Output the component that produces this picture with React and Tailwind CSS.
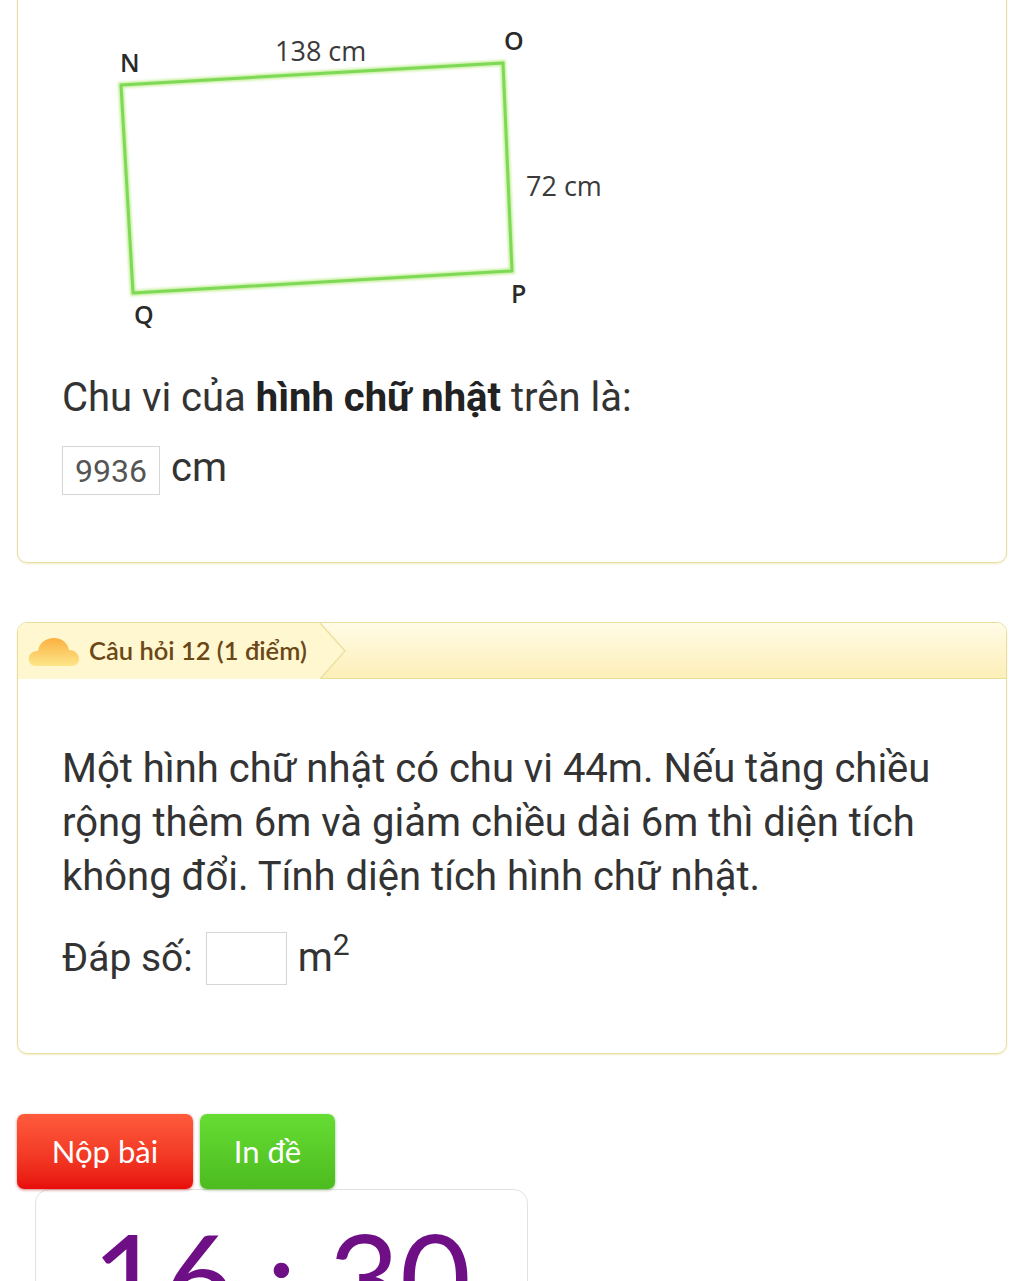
import React from 'react';

function Figure() {
  // Rectangle NOPQ drawn as in the worksheet, coords are page coords
  return (
    <svg width="660" height="345" viewBox="0 0 660 345" className="block -ml-[18px]" style={{ fontFamily: '"Open Sans", sans-serif' }}>
      <defs>
        <filter id="glow" x="-10%" y="-10%" width="120%" height="120%">
          <feGaussianBlur stdDeviation="1.2" />
        </filter>
      </defs>
      <polygon points="121,84 503,62 512,270 133,292" fill="none" stroke="#c8f0a0" strokeWidth="6" filter="url(#glow)" />
      <polygon points="121,84 503,62 512,270 133,292" fill="none" stroke="#7ed957" strokeWidth="3" strokeLinejoin="round" />
      <text x="120" y="71" fontSize="25" fontWeight="600" fill="#2a2a2a">N</text>
      <text x="275" y="60" fontSize="27" fill="#3a3a3a">138 cm</text>
      <text x="504" y="49" fontSize="25" fontWeight="600" fill="#2a2a2a">O</text>
      <text x="526" y="195" fontSize="27" fill="#3a3a3a">72 cm</text>
      <text x="511" y="302" fontSize="25" fontWeight="600" fill="#2a2a2a">P</text>
      <text x="134" y="323" fontSize="25" fontWeight="600" fill="#2a2a2a">Q</text>
    </svg>
  );
}

function Cloud() {
  return (
    <svg width="54" height="36" viewBox="0 0 54 36" className="shrink-0">
      <defs>
        <linearGradient id="cloudg" x1="0" y1="0" x2="0" y2="1">
          <stop offset="0%" stopColor="#fbb040" />
          <stop offset="100%" stopColor="#fde68a" />
        </linearGradient>
      </defs>
      <path
        d="M9 33 C3 33 1 28 2 24 C3 20 7 18 11 18 C12 10 19 5 27 5 C35 5 41 10 42 17 C48 17 52 21 52 26 C52 30 49 33 45 33 Z"
        fill="url(#cloudg)"
      />
    </svg>
  );
}

export default function App() {
  return (
    <div className="w-[1024px] h-[1281px] overflow-hidden bg-white px-[17px] text-[#333]" style={{ fontFamily: 'Roboto, "Noto Sans", sans-serif' }}>
      {/* Question 11 card (top cut off) */}
      <div className="-mt-[24px] pt-[24px] border border-[#e8df9f] rounded-[10px] pb-[67px] shadow-[0_1px_2px_rgba(220,205,120,0.4)]">
        <Figure />
        <p className="mt-[28px] pl-[44px] text-[40px] leading-[48px]">
          Chu vi của <b className="font-bold text-[#222]">hình chữ nhật</b> trên là:
        </p>
        <div className="mt-[24px] pl-[44px] flex items-center gap-[11px]">
          <div className="w-[98px] h-[49px] border border-[#d6d6d6] flex items-center justify-center text-[32px] text-[#555]">9936</div>
          <span className="text-[40px] leading-none -mt-[6px]">cm</span>
        </div>
      </div>

      {/* Question 12 card */}
      <div className="mt-[59px] border border-[#e8df9f] rounded-[10px] overflow-hidden shadow-[0_1px_2px_rgba(220,205,120,0.4)]">
        <div className="relative h-[56px] border-b border-[#e9df9c] bg-gradient-to-b from-[#fffbe6] to-[#fdefb8] flex items-center">
          <svg width="330" height="56" viewBox="0 0 330 56" className="absolute left-0 top-0">
            <polygon points="0,0 302,0 327,28 302,56 0,56" fill="#fff7cf" />
            <polyline points="302,0 327,28 302,56" fill="none" stroke="#ede1a0" strokeWidth="1.5" />
          </svg>
          <div className="relative flex items-center pl-[9px] gap-[8px]">
            <Cloud />
            <span className="text-[25.5px] font-semibold text-[#6b4718]" style={{ fontFamily: 'Lato, "Open Sans", sans-serif' }}>
              Câu hỏi 12 (1 điểm)
            </span>
          </div>
        </div>
        <div className="pt-[63px] pb-[65px] pl-[44px] pr-[40px]">
          <p className="text-[40px] leading-[54px]">
            Một hình chữ nhật có chu vi 44m. Nếu tăng chiều rộng thêm 6m và giảm chiều dài 6m thì diện tích không đổi. Tính diện tích hình chữ nhật.
          </p>
          <div className="mt-[24px] flex items-center">
            <span className="text-[39px]">Đáp số:</span>
            <div className="ml-[13px] w-[81px] h-[53px] border border-[#d6d6d6]" />
            <span className="ml-[11px] text-[40px]">
              m<sup className="text-[30px] -top-[16px] relative align-baseline">2</sup>
            </span>
          </div>
        </div>
      </div>

      {/* Buttons */}
      <div className="mt-[60px] flex gap-[7px]" style={{ fontFamily: 'Lato, "Open Sans", sans-serif' }}>
        <button className="w-[176px] h-[75px] rounded-[7px] bg-gradient-to-b from-[#ff5a3c] to-[#e80a0a] text-white text-[31px] shadow-[0_1px_3px_rgba(180,0,0,0.5)]">
          Nộp bài
        </button>
        <button className="w-[135px] h-[75px] rounded-[7px] bg-gradient-to-b from-[#66dd33] to-[#4cbb1f] text-white text-[31px] shadow-[0_1px_3px_rgba(40,120,0,0.5)]">
          In đề
        </button>
      </div>

      {/* Timer */}
      <div className="ml-[18px] w-[493px] h-[140px] border border-[#e2e2e2] rounded-[14px] flex justify-center">
        <span className="mt-[24px] text-[123px] leading-none text-[#6e0f86]" style={{ fontFamily: 'Lato, "Open Sans", sans-serif' }}>
          16 : 30
        </span>
      </div>
    </div>
  );
}
